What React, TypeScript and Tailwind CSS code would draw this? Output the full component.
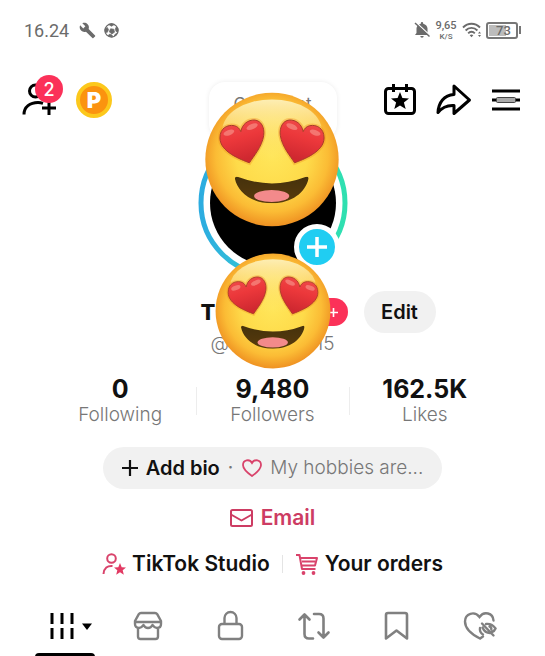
import React, { useId } from "react";

type Stat = {
  value: string;
  label: string;
};

type Tab = {
  name: string;
  icon: React.ReactNode;
};

const stats: Stat[] = [
  { value: "0", label: "Following" },
  { value: "9,480", label: "Followers" },
  { value: "162.5K", label: "Likes" },
];

const HeartEyes: React.FC<{ className: string }> = ({ className }) => {
  const id = useId();
  const heart =
    "M134 213C108 203 45 180 45 138C45 108 68 97 88 101C99 103 105 111 108 119C112 96 130 83 150 84C170 86 180 107 177 130C172 165 145 195 134 213Z";
  return (
    <svg viewBox="0 0 404 406" className={className} aria-hidden="true">
      <defs>
        <radialGradient id={`${id}face`} cx="50%" cy="47%" r="54%">
          <stop offset="0" stopColor="#ffe65a" />
          <stop offset="0.5" stopColor="#fedb4a" />
          <stop offset="0.78" stopColor="#fbbc35" />
          <stop offset="1" stopColor="#ee8e20" />
        </radialGradient>
        <linearGradient id={`${id}shine`} x1="0" y1="0" x2="0" y2="1">
          <stop offset="0" stopColor="#fdeeb4" />
          <stop offset="1" stopColor="#ffe670" stopOpacity="0" />
        </linearGradient>
        <linearGradient id={`${id}heart`} x1="0" y1="0" x2="0.3" y2="1">
          <stop offset="0" stopColor="#f0504f" />
          <stop offset="0.5" stopColor="#ec383b" />
          <stop offset="1" stopColor="#cf2830" />
        </linearGradient>
        <linearGradient id={`${id}mouth`} x1="0" y1="0" x2="0" y2="1">
          <stop offset="0" stopColor="#43300c" />
          <stop offset="1" stopColor="#5a3c0c" />
        </linearGradient>
        <g id={`${id}eye`}>
          <path d={heart} fill="#f28a1c" stroke="#f28a1c" strokeWidth="12" opacity="0.35" />
          <path d={heart} fill={`url(#${id}heart)`} stroke="#a83a28" strokeWidth="3" />
          <ellipse cx="72" cy="122" rx="17" ry="8" transform="rotate(-20 72 122)" fill="#f9a297" opacity="0.55" />
          <ellipse cx="142" cy="104" rx="18" ry="8" transform="rotate(-24 142 104)" fill="#f9a297" opacity="0.55" />
        </g>
        <clipPath id={`${id}clip`}>
          <path d="M90 260Q91 252 100 256Q202 294 303 256Q313 252 312 261C303 302 262 335 202 335C140 335 99 302 90 260Z" />
        </clipPath>
      </defs>
      <circle cx="202" cy="203" r="201" fill={`url(#${id}face)`} />
      <ellipse cx="202" cy="116" rx="150" ry="94" fill={`url(#${id}shine)`} />
      <use href={`#${id}eye`} />
      <use href={`#${id}eye`} transform="translate(404 0) scale(-1 1)" />
      <g clipPath={`url(#${id}clip)`}>
        <rect x="85" y="245" width="235" height="95" fill={`url(#${id}mouth)`} />
        <ellipse cx="201" cy="313" rx="53" ry="18" fill="#f38a8b" />
      </g>
    </svg>
  );
};

const StatusBar = () => (
  <div className="flex h-[60px] items-center justify-between px-6 font-[Roboto,sans-serif] text-[#6b6b6b]">
    <div className="flex items-center">
      <span className="text-[18px]">16.24</span>
      <svg viewBox="0 0 24 24" className="ml-2.5 size-[17px]" fill="currentColor" aria-hidden="true">
        <path d="M22.7 19l-9.1-9.1c.9-2.3.4-5-1.5-6.9-2-2-5-2.4-7.400-1.300L9 6 6 9 1.600 4.700C.4 7.100.9 10.100 2.900 12.100c1.900 1.900 4.600 2.400 6.900 1.500l9.100 9.100c.4.4 1 .4 1.400 0l2.300-2.300c.5-.4.5-1.100.1-1.400z" />
      </svg>
      <svg viewBox="0 0 16 16" className="ml-2 size-[15px]" aria-hidden="true">
        <circle cx="8" cy="8" r="7" fill="#fff" stroke="currentColor" strokeWidth="1.4" />
        <path d="M5 1.6L8 3.4l3-1.8-3-1zM7 6.2l3.4.4.8 3.2-2.8 1.8L5.6 9.4zM1 6.5l2.6-1.6 1.2 2.2L3.4 10 1.3 9.6zM15 6l-2.2-1.4L12 7l1.400 2.600 1.500-.8zM4.600 13.800l1-1.800 3 .8.4 2.200zM11 13.800l1-2 2-.6z" fill="currentColor" stroke="currentColor" strokeWidth="0.8" />
      </svg>
    </div>
    <div className="flex items-center">
      <svg viewBox="0 0 16 18" className="h-[18px] w-4" fill="currentColor" aria-hidden="true">
        <path d="M8 1a1.2 1.2 0 0 1 1.2 1.2v.5C11.8 3.3 13.500 5.200 13.500 7.500V11.500L15 14H1L2.500 12V7.500C2.500 5.200 4.300 3.300 6.800 2.700V2.200A1.200 1.200 0 0 1 8 1zM6.300 15h3.400a1.700 1.700 0 0 1-3.400 0z" />
        <path d="M2 1.500L16 14.500" stroke="#fff" strokeWidth="1.5" />
        <path d="M1 2L15.500 15.500" stroke="currentColor" strokeWidth="1.5" />
      </svg>
      <span className="ml-1 flex w-6 flex-col items-center font-medium">
        <span className="text-[11px] leading-[13px]">9,65</span>
        <span className="text-[8px] leading-[10px]">K/S</span>
      </span>
      <svg viewBox="0 0 20 16" className="ml-1 h-4 w-5" fill="none" stroke="currentColor" strokeWidth="1.9" aria-hidden="true">
        <path d="M1 5.5C6 .5 13 .5 18 5.5M3.6 8.5C7 5 12 5 15.4 8.5M6.200 11.300C8 9.300 11 9.300 12.800 11.300" />
        <path d="M7.700 13.200C8.700 12.200 10.300 12.200 11.300 13.200L9.500 15.200z" fill="currentColor" stroke="none" />
        <path d="M17.500 9.500l1.500 2h-3zM17.500 15l1.500-2h-3z" fill="currentColor" stroke="none" />
      </svg>
      <span className="ml-1 flex items-center">
        <span className="flex h-[17px] w-8 items-center rounded-[3px] border-2 border-[#777] p-px">
          <span className="flex h-full w-[17px] items-center bg-[#bcbcbc]">
            <span className="pl-[7px] text-[13px] leading-none font-medium">73</span>
          </span>
        </span>
        <span className="ml-px h-2 w-0.5 bg-[#777]" />
      </span>
    </div>
  </div>
);

const Header = () => (
  <header className="flex h-20 items-center justify-between pr-6 pl-[22px]">
    <div className="flex items-center gap-4">
      <button aria-label="Add friends, 2 new" className="relative">
        <svg viewBox="0 0 38 34" className="h-[34px] w-[38px]" fill="none" stroke="#000" strokeWidth="3" aria-hidden="true">
          <circle cx="13.5" cy="8" r="6" />
          <path d="M2 31.500C2 24 8 19.500 16 19.500c2 0 3.500.3 5 .8M27 18v14M20 25h14" />
        </svg>
        <span className="absolute -top-2 left-[13px] flex size-7 items-center justify-center rounded-full bg-[#fb3159] text-[18px] font-medium text-white">
          2
        </span>
      </button>
      <button
        aria-label="Points"
        className="flex size-9 items-center justify-center rounded-full border-4 border-[#fcc81c] bg-[#fb930f] text-[22px] leading-none font-black text-white"
      >
        P
      </button>
    </div>
    <div className="flex items-center gap-[19px]">
      <button aria-label="Events">
        <svg viewBox="0 0 34 34" className="size-[34px]" fill="none" stroke="#000" strokeWidth="3" aria-hidden="true">
          <rect x="2.5" y="5.5" width="29" height="25" rx="3" />
          <path d="M10.500 1v8M23.500 1v8" />
          <path d="M17 9l2.400 6 6.600.4-5.100 4.100 1.800 6.500-5.700-3.600-5.700 3.600 1.800-6.500L8 15.400l6.600-.4z" fill="#000" stroke="none" />
        </svg>
      </button>
      <button aria-label="Share profile">
        <svg viewBox="0 0 36 34" className="h-[34px] w-9" fill="none" stroke="#000" strokeWidth="3" strokeLinejoin="round" aria-hidden="true">
          <path d="M18 3L33.500 17 18 30.500V22.500C11 22 6 24.500 2 29.500 2.500 19.500 8 12 18 11.500z" />
        </svg>
      </button>
      <button aria-label="Menu">
        <svg viewBox="0 0 30 24" className="h-6 w-[30px]" aria-hidden="true">
          <path d="M1 3h28M1 12h28M1 21h28" stroke="#000" strokeWidth="3" />
          <rect x="5.500" y="9.500" width="19" height="5" rx="1" fill="#aaa" stroke="#444" />
        </svg>
      </button>
    </div>
  </header>
);

const Avatar = () => (
  <div className="relative mt-[68px] size-[150px]">
    <svg viewBox="0 0 150 150" className="size-full" aria-hidden="true">
      <defs>
        <linearGradient id="ring" x1="0" y1="0" x2="1" y2="0">
          <stop offset="0" stopColor="#2cace0" />
          <stop offset="0.5" stopColor="#37cfd0" />
          <stop offset="1" stopColor="#2fe0b0" />
        </linearGradient>
      </defs>
      <circle cx="75" cy="75" r="72" fill="#fff" stroke="url(#ring)" strokeWidth="5" />
      <circle cx="75" cy="75" r="63" fill="#000" />
    </svg>
    <div className="absolute -top-[46px] left-[11px] flex h-[58px] w-32 justify-center rounded-2xl bg-white pt-3 text-[17px] leading-5 text-[#777] shadow-[0_0_5px_rgba(0,0,0,0.08)]">
      Comment
    </div>
    <HeartEyes className="absolute -top-[36px] left-[7px] h-[135px] w-[134px]" />
    <button
      aria-label="Add story"
      className="absolute right-2 bottom-2 flex size-[46px] items-center justify-center rounded-full border-[5px] border-white bg-[#20cdf2]"
    >
      <svg viewBox="0 0 20 20" className="size-5" stroke="#fff" strokeWidth="3.5" aria-hidden="true">
        <path d="M10 0v20M0 10h20" />
      </svg>
    </button>
  </div>
);

const Identity = () => (
  <section className="relative mt-[13px] w-full">
    <div className="grid grid-cols-[1fr_150px_1fr] items-center">
      <div className="col-start-2 flex items-center justify-between pl-[3px]">
        <h1 className="text-[22px] font-extrabold">T</h1>
        <button aria-label="Add name tag" className="flex h-7 w-12 items-center justify-end rounded-full bg-[#fb3159] pr-2.5">
          <svg viewBox="0 0 10 10" className="size-[9px]" stroke="#fff" strokeWidth="1.8" aria-hidden="true">
            <path d="M5 0v10M0 5h10" />
          </svg>
        </button>
      </div>
      <button className="ml-4 h-[42px] w-[72px] rounded-full bg-[#f1f1f1] text-[20px] font-semibold">Edit</button>
    </div>
    <p className="mx-auto flex w-[124px] justify-between text-[19px] leading-[22px] font-light text-[#777]">
      <span>@</span>
      <span>15</span>
    </p>
    <HeartEyes className="absolute -top-[38px] right-1/2 size-[116px] translate-x-1/2" />
  </section>
);

const tabs: Tab[] = [
  {
    name: "Posts",
    icon: (
      <svg viewBox="0 0 44 32" className="ml-3 h-8 w-11" aria-hidden="true">
        <path d="M3 3v11M13 3v11M23 3v11M3 18v11M13 18v11M23 18v11" stroke="#000" strokeWidth="3" />
        <path d="M33 13.5h10L38 20z" fill="#000" />
      </svg>
    ),
  },
  {
    name: "Shop",
    icon: (
      <svg viewBox="0 0 32 32" className="size-8" fill="none" stroke="currentColor" strokeWidth="2.4" strokeLinejoin="round" aria-hidden="true">
        <path d="M9 3h14c1 0 1.700.4 2.200 1.200L29 11v3c0 2.500-1.500 4-4 4-2 0-3-1-4.500-3-1 2-2.500 3-4.500 3s-3.500-1-4.500-3C10 17 9 18 7 18c-2.500 0-4-1.500-4-4v-3l3.800-6.800C7.300 3.400 8 3 9 3zM3 12h26M6 18v8.500c0 1.700.8 2.500 2.500 2.500h15c1.700 0 2.500-.8 2.500-2.500V18" />
      </svg>
    ),
  },
  {
    name: "Private",
    icon: (
      <svg viewBox="0 0 32 32" className="size-8" fill="none" stroke="currentColor" strokeWidth="2.4" aria-hidden="true">
        <rect x="4" y="14" width="23" height="15" rx="3" />
        <path d="M9.500 14V8a6 6 0 0 1 12 0V14" />
      </svg>
    ),
  },
  {
    name: "Reposts",
    icon: (
      <svg viewBox="0 0 34 32" className="h-8 w-[34px]" fill="none" stroke="currentColor" strokeWidth="2.6" strokeLinecap="round" strokeLinejoin="round" aria-hidden="true">
        <path d="M16 28.500h-4c-3 0-4.500-1.500-4.500-4.500V5M2.500 9.500l5-5L12.500 9.500M17 4h5c3 0 4.500 1.500 4.500 4.500V27M21.500 22.500l5 5L31.500 22.500" />
      </svg>
    ),
  },
  {
    name: "Favorites",
    icon: (
      <svg viewBox="0 0 32 32" className="size-8" fill="none" stroke="currentColor" strokeWidth="2.6" strokeLinejoin="round" aria-hidden="true">
        <path d="M7 3h17c1.200 0 2 .8 2 2v23.500L15.500 20.500 5 28.500V5c0-1.200.8-2 2-2z" />
      </svg>
    ),
  },
  {
    name: "Liked",
    icon: (
      <svg viewBox="0 0 34 32" className="h-8 w-[34px]" fill="none" stroke="currentColor" strokeWidth="2.4" strokeLinecap="round" aria-hidden="true">
        <path d="M20 26.500l-3 2C10 25 2 19 2 11.500 2 3.500 11.500.5 16.500 7 21 .5 30 3 30.500 10.500" />
        <path d="M17 18c-.500 3 .5 5 3 6.500M19 13.500L30.500 25.500M23 14c4.500-.500 7.500 1.500 9.500 4.500-.8 2-2 3-3.500 3.500M19.500 17.500c1.500 3.500 4 5.500 7.500 5.500M26.500 16.500c1.500.5 2 1.500 1.800 3" />
      </svg>
    ),
  },
];

export default function App() {
  return (
    <main className="flex min-h-screen flex-col bg-white font-[Inter,sans-serif] text-[#111]">
      <StatusBar />
      <div className="grid">
        <div className="col-start-1 row-start-1">
          <Header />
        </div>
        <div className="col-start-1 row-start-1 justify-self-center">
          <Avatar />
        </div>
      </div>
      <Identity />

      {/* Stats */}
      <dl className="mx-11 mt-5 grid grid-cols-3">
        {stats.map((stat, i) => (
          <div key={stat.label} className="relative flex flex-col-reverse items-center">
            <dt className="text-[19px] leading-6 font-light text-[#777]">{stat.label}</dt>
            <dd className="text-[25px] leading-7 font-bold">{stat.value}</dd>
            {i > 0 && <span className="absolute top-3 left-0 h-7 w-px bg-[#ededed]" />}
          </div>
        ))}
      </dl>

      {/* Bio prompt */}
      <button className="mx-auto mt-5 flex h-[42px] items-center rounded-full bg-[#f1f1f1] px-[19px] text-[19px] whitespace-nowrap">
        <svg viewBox="0 0 16 16" className="size-4" stroke="#111" strokeWidth="2.2" aria-hidden="true">
          <path d="M8 0v16M0 8h16" />
        </svg>
        <span className="ml-2 text-[20px] font-semibold">Add bio</span>
        <span className="mx-2 text-[#777]">·</span>
        <svg viewBox="0 0 20 18" className="ml-px h-[18px] w-5" fill="none" stroke="#d9436b" strokeWidth="1.8" aria-hidden="true">
          <path d="M10 17C5 13.5 1 10 1 6 1 1 7.500-.5 10 4 12.500-.5 19 1 19 6c0 4-4 7.500-9 11z" />
        </svg>
        <span className="ml-2 font-light text-[#777]">My hobbies are...</span>
      </button>

      <a href="#email" className="mx-auto mt-[15px] flex items-center gap-[7px] text-[21px] leading-7 font-semibold text-[#cd3c63]">
        <svg viewBox="0 0 24 20" className="h-5 w-6" fill="none" stroke="currentColor" strokeWidth="2" strokeLinejoin="round" aria-hidden="true">
          <rect x="1" y="2" width="21" height="16" rx="1.5" />
          <path d="M1 6.500l10.500 6L22 6.500" />
        </svg>
        Email
      </a>

      {/* Shortcuts */}
      <nav className="mx-auto mt-[17px] flex items-center text-[21px] leading-[30px] font-semibold whitespace-nowrap">
        <a href="#studio" className="flex items-center gap-1.5">
          <svg viewBox="0 0 24 24" className="size-6" fill="none" stroke="#d9436b" strokeWidth="2" aria-hidden="true">
            <circle cx="9.500" cy="6.500" r="4.300" />
            <path d="M1.500 22C2 16 5.500 13.500 10.500 14" />
            <path d="M18 11l1.700 4.200 4.300.3-3.300 2.800 1.100 4.400L18 20.300l-3.800 2.400 1.100-4.400-3.300-2.800 4.300-.3z" fill="#e23a63" stroke="none" />
          </svg>
          TikTok Studio
        </a>
        <span className="mx-3 h-[18px] w-px bg-[#e4e4e4]" />
        <a href="#orders" className="flex items-center gap-1.5">
          <svg viewBox="0 0 24 24" className="size-6" fill="none" stroke="#d9436b" strokeWidth="2" strokeLinejoin="round" aria-hidden="true">
            <path d="M1 3h3.500L7 17h13.500M5 6h17l-2 7.500H6.300M7 9.500h13" />
            <circle cx="8.500" cy="21" r="1.900" fill="#d9436b" stroke="none" />
            <circle cx="18.500" cy="21" r="1.900" fill="#d9436b" stroke="none" />
          </svg>
          Your orders
        </a>
      </nav>

      {/* Content tabs */}
      <div role="tablist" className="mt-[23px] grid grid-cols-6 px-6 text-[#808080]">
        {tabs.map((tab, i) => (
          <button key={tab.name} role="tab" aria-label={tab.name} aria-selected={i === 0} className="flex flex-col items-center pt-2">
            {tab.icon}
            {i === 0 && <span className="mt-[11px] h-1 w-[60px] rounded-t bg-black" />}
          </button>
        ))}
      </div>
    </main>
  );
}
